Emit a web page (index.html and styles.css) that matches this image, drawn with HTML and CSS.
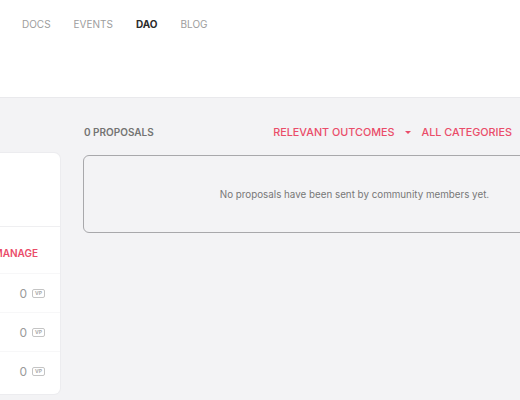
FILE: index.html
```html
<!DOCTYPE html>
<html>
<head>
<meta charset="utf-8">
<link rel="stylesheet" href="styles.css">
</head>
<body>
<header class="top">
  <nav class="nav">
    <a class="nav-link">DOCS</a>
    <a class="nav-link">EVENTS</a>
    <a class="nav-link active">DAO</a>
    <a class="nav-link">BLOG</a>
  </nav>
</header>
<div class="page">
  <aside class="card">
    <div class="card-head"></div>
    <div class="card-manage">MANAGE</div>
    <div class="card-row"><span class="num">0</span><span class="vp">VP</span></div>
    <div class="card-row"><span class="num">0</span><span class="vp">VP</span></div>
    <div class="card-row last"><span class="num">0</span><span class="vp">VP</span></div>
  </aside>
  <main class="main">
    <div class="list-head">
      <span class="count">0 PROPOSALS</span>
      <div class="filters">
        <span class="filter">RELEVANT OUTCOMES</span>
        <span class="caret"></span>
        <span class="filter">ALL CATEGORIES</span>
      </div>
    </div>
    <div class="empty">No proposals have been sent by community members yet.</div>
  </main>
</div>
</body>
</html>
```
FILE: styles.css
```css
html, body {
  margin: 0;
  padding: 0;
  height: 100%;
  overflow: hidden;
}
body {
  background: #f3f3f5;
  font-family: Inter, "Liberation Sans", sans-serif;
  color: #666;
}
.top {
  background: #fff;
  height: 97px;
  border-bottom: 1px solid #e9e9ec;
}
.nav {
  display: flex;
  gap: 23px;
  padding: 18px 0 0 22px;
}
.nav-link {
  font-size: 10px;
  line-height: 13px;
  color: #9d9d9d;
  font-weight: 400;
}
.nav-link.active {
  color: #2b2b2b;
  font-weight: 700;
}
.page {
  display: flex;
  gap: 23px;
  align-items: flex-start;
}
.card {
  width: 60px;
  margin-top: 55px;
  background: #fff;
  border-radius: 0 6px 6px 0;
  box-shadow: 0 0 0 1px #ececef;
  padding-bottom: 4px;
}
.card-head {
  height: 73px;
  border-bottom: 1px solid #efeff1;
}
.card-manage {
  height: 46px;
  line-height: 52px;
  font-size: 10px;
  font-weight: 600;
  color: #ea4c69;
  text-align: right;
  padding-right: 22px;
  overflow: hidden;
  white-space: nowrap;
  direction: rtl;
  border-bottom: 1px solid #f7f7f8;
}
.card-row {
  height: 38px;
  display: flex;
  align-items: center;
  justify-content: flex-end;
  gap: 5px;
  padding-right: 15px;
  border-bottom: 1px solid #f7f7f8;
}
.card-row.last {
  border-bottom: none;
}
.num {
  font-size: 12px;
  color: #9a9a9a;
}
.vp {
  font-size: 5px;
  line-height: 7px;
  font-weight: 700;
  color: #aaa;
  border: 1px solid #c4c4c4;
  border-radius: 2px;
  padding: 0 2px;
}
.main {
  width: 543px;
  flex-shrink: 0;
}
.list-head {
  display: flex;
  justify-content: space-between;
  align-items: center;
  height: 20px;
  margin-top: 24px;
  margin-left: 1px;
}
.count {
  font-size: 10px;
  font-weight: 600;
  color: #737373;
}
.filters {
  display: flex;
  align-items: center;
  margin-right: 114px;
}
.filter {
  font-size: 10.8px;
  font-weight: 500;
  color: #ea4c69;
}
.caret {
  width: 0;
  height: 0;
  border-left: 3px solid transparent;
  border-right: 3px solid transparent;
  border-top: 3px solid #ea4c69;
  margin: 0 11px 0 10px;
}
.empty {
  margin-top: 13px;
  height: 76px;
  border: 1px solid #a8a8ab;
  border-radius: 6px;
  display: flex;
  align-items: center;
  justify-content: center;
  font-size: 9.8px;
  color: #777;
}
```
